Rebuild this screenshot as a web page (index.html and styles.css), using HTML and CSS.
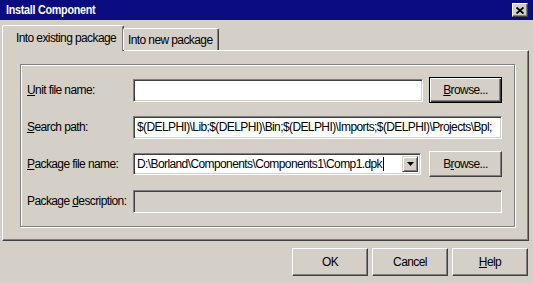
FILE: index.html
```html
<!DOCTYPE html>
<html>
<head>
<meta charset="utf-8">
<link rel="stylesheet" href="styles.css">
</head>
<body>
<div class="window">
  <div class="titlebar">
    <span class="title">Install Component</span>
    <span class="close"><svg width="8" height="7" viewBox="0 0 8 7"><path d="M0.5 0.5 L7.5 6.5 M7.5 0.5 L0.5 6.5" stroke="#000" stroke-width="1.8" fill="none"/></svg></span>
  </div>
  <div class="body">
    <div class="tabs">
      <div class="tab active">Into existing package</div>
      <div class="tab">Into new package</div>
    </div>
    <div class="page">
      <div class="group">
        <div class="row">
          <label class="lbl"><u>U</u>nit file name:</label>
          <div class="field w-short"></div>
          <button class="btn default"><span><u>B</u>rowse...</span></button>
        </div>
        <div class="row">
          <label class="lbl"><u>S</u>earch path:</label>
          <div class="field w-long">$(DELPHI)\Lib;$(DELPHI)\Bin;$(DELPHI)\Imports;$(DELPHI)\Projects\Bpl;</div>
        </div>
        <div class="row">
          <label class="lbl"><u>P</u>ackage file name:</label>
          <div class="field combo w-combo">
            <span class="ctext">D:\Borland\Components\Components1\Comp1.dpk<span class="caret"></span></span>
            <span class="drop"><svg width="7" height="4" viewBox="0 0 7 4"><path d="M0 0 H7 L3.5 4 Z" fill="#000"/></svg></span>
          </div>
          <button class="btn"><span>B<u>r</u>owse...</span></button>
        </div>
        <div class="row">
          <label class="lbl">Package <u>d</u>escription:</label>
          <div class="field w-long disabled"></div>
        </div>
      </div>
    </div>
    <div class="actions">
      <button class="btn big">OK</button>
      <button class="btn big">Cancel</button>
      <button class="btn big"><span><u>H</u>elp</span></button>
    </div>
  </div>
</div>
</body>
</html>
```
FILE: styles.css
```css
* { box-sizing: border-box; }
html, body { margin: 0; padding: 0; }
body {
  width: 533px;
  height: 283px;
  overflow: hidden;
  font-family: "Liberation Sans", Arial, sans-serif;
  font-size: 12px;
  letter-spacing: -0.6px;
  color: #000;
}
.window {
  width: 533px;
  height: 283px;
  background: #d4d0c8;
  display: flex;
  flex-direction: column;
}
.titlebar {
  height: 20px;
  background: #0a0c80;
  display: flex;
  align-items: center;
  justify-content: space-between;
  padding: 0 5px 0 6px;
}
.title {
  display: inline-block;
  color: #fff;
  font-weight: bold;
  font-size: 12.5px;
  letter-spacing: -0.3px;
  transform: scaleX(0.86);
  transform-origin: left center;
}
.close {
  width: 16px;
  height: 14px;
  background: #d4d0c8;
  border: 1px solid;
  border-color: #fff #404040 #404040 #fff;
  box-shadow: inset -1px -1px #808080;
  display: flex;
  align-items: center;
  justify-content: center;
}
.body {
  padding: 5px 4px 0 2px;
  display: flex;
  flex-direction: column;
}
.tabs {
  display: flex;
  align-items: flex-end;
  height: 25px;
  position: relative;
  z-index: 1;
}
.tab {
  height: 22px;
  padding: 0 4px;
  border: 1px solid;
  border-bottom: none;
  border-color: #fff #404040 transparent #fff;
  box-shadow: inset -1px 0 #808080;
  border-radius: 2px 2px 0 0;
  display: flex;
  align-items: center;
  background: #d4d0c8;
  white-space: nowrap;
}
.tab.active {
  height: 26px;
  margin-bottom: -1px;
  padding: 0 4px 2px 13px;
  width: 122px;
}
.tab:not(.active) {
  width: 96px;
  padding-left: 4px;
  margin-left: -1px;
}
.page {
  height: 191px;
  border: 1px solid;
  border-color: #fff #404040 #404040 #fff;
  box-shadow: inset -1px -1px #808080;
  padding: 13px 0 0 17px;
}
.group {
  width: 495px;
  height: 163px;
  border: 1px solid #808080;
  box-shadow: inset 1px 1px #fff, 1px 1px #fff;
  padding: 12px 0 0 6px;
  display: flex;
  flex-direction: column;
  gap: 11px;
}
.row {
  height: 26px;
  display: flex;
  align-items: center;
}
.lbl {
  width: 106px;
  flex: none;
  white-space: nowrap;
}
.field {
  height: 23px;
  background: #fff;
  border: 1px solid;
  border-color: #808080 #fff #fff #808080;
  box-shadow: inset 1px 1px #404040, inset -1px -1px #d4d0c8;
  padding: 0 3px;
  display: flex;
  align-items: center;
  white-space: nowrap;
  overflow: hidden;
  flex: none;
}
.w-short { width: 290px; margin-right: 6px; }
.w-long { width: 369px; }
.w-combo { width: 288px; margin-right: 8px; height: 22px; }
.disabled { background: #d4d0c8; }
.combo {
  justify-content: space-between;
  padding-right: 2px;
}
.ctext { display: flex; align-items: center; }
.caret {
  display: inline-block;
  width: 1px;
  height: 14px;
  background: #000;
  margin-left: 1px;
}
.drop {
  width: 16px;
  height: 16px;
  background: #d4d0c8;
  border: 1px solid;
  border-color: #d4d0c8 #404040 #404040 #d4d0c8;
  box-shadow: inset 1px 1px #fff, inset -1px -1px #808080;
  display: flex;
  align-items: center;
  justify-content: center;
}
.btn {
  width: 73px;
  height: 26px;
  background: #d4d0c8;
  border: 1px solid;
  border-color: #fff #404040 #404040 #fff;
  box-shadow: inset -1px -1px #808080;
  font-family: inherit;
  font-size: 12px;
  letter-spacing: inherit;
  color: #000;
  padding: 0;
  flex: none;
}
.btn.default {
  border: 1px solid #000;
  box-shadow: inset 1px 1px #fff, inset -1px -1px #404040, inset -2px -2px #808080;
}
.actions {
  display: flex;
  justify-content: flex-end;
  gap: 4px;
  padding: 7px 1px 0 0;
}
.btn.big {
  width: 76px;
  height: 28px;
}
```
